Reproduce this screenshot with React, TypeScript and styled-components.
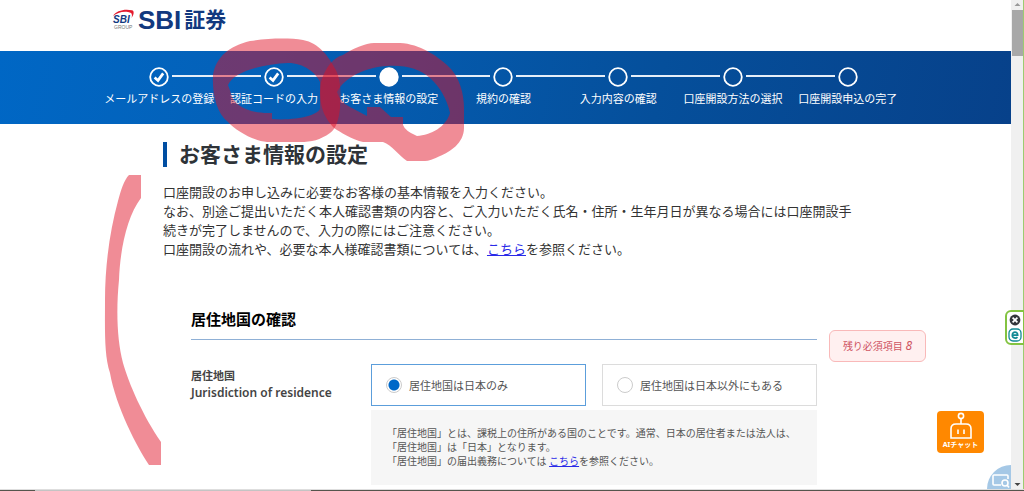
import React from "react";
import styled, { createGlobalStyle } from "styled-components";

const GlobalStyle = createGlobalStyle`
  * { box-sizing: border-box; }
  body {
    margin: 0;
    background: #fff;
    color: #333;
    font-family: "Noto Sans", "Noto Sans CJK JP", sans-serif;
    font-size: 13px;
    line-height: 19px;
  }
  a { color: #2a2ae8; }
`;

const Window = styled.div`
  position: relative;
  display: flex;
  flex-direction: column;
  height: 100vh;
  overflow: hidden;
`;

const Viewport = styled.div`
  display: flex;
  flex: 1;
  min-height: 0;
`;

const Page = styled.div`
  flex: 1;
  min-width: 0;
  overflow: hidden;
`;

const Header = styled.header`
  display: flex;
  align-items: center;
  height: 51px;
  padding: 0 112px 12px;
`;

const Logo = styled.a`
  display: flex;
  align-items: center;
  gap: 3px;
  color: #12397f;
  text-decoration: none;
`;

const GroupMark = styled.svg`
  width: 23px;
  height: 21px;
`;

const Brand = styled.span`
  display: flex;
  align-items: center;
  gap: 3px;
  font: 700 26px/30px "Liberation Sans", "Noto Sans CJK JP", sans-serif;
`;

const BrandKanji = styled.span`
  font-size: 21px;
  font-weight: 700;
`;

const StepBar = styled.nav`
  padding: 16px 106px 16px 102px;
  height: 73px;
  background: linear-gradient(100deg, #0067c5 0%, #0461b8 25%, #054f9b 65%, #07418a 100%);
`;

const StepList = styled.ol`
  display: grid;
  grid-template-columns: repeat(7, 1fr);
  margin: 0;
  padding: 0;
  list-style: none;
`;

const Step = styled.li`
  display: flex;
  flex-direction: column;
  gap: 4px;
  color: #fff;
  font-size: 11px;
  line-height: 16px;
  text-align: center;
  white-space: nowrap;
`;

const StepTrack = styled.span`
  display: grid;
  grid-template-columns: 1fr 20px 1fr;
  align-items: center;
  gap: 3px;
`;

const StepLine = styled.span<{ $shown: boolean }>`
  height: 2px;
  margin-bottom: 2px;
  background: ${(p) => (p.$shown ? "#e6eef8" : "transparent")};
`;

const StepLabel = styled.span`
  display: flex;
  justify-content: center;
`;

const Content = styled.main`
  max-width: 685px;
  margin: 0 auto;
  padding-top: 18px;
`;

const Title = styled.h1`
  margin: 0;
  padding-left: 12px;
  border-left: 4px solid #004ea2;
  color: #2e3338;
  font-size: 21px;
  line-height: 25px;
`;

const Lead = styled.p`
  margin: 16px 0 0;
  white-space: nowrap;
`;

const Section = styled.section`
  padding: 50px 31px 0 28px;
`;

const SectionTitle = styled.h2`
  margin: 0;
  padding-bottom: 10px;
  border-bottom: 1px solid #8fb0d6;
  color: #000;
  font-size: 15px;
  line-height: 20px;
`;

const Field = styled.fieldset`
  display: grid;
  grid-template-columns: 180px 1fr;
  margin: 0;
  padding: 24px 0 0;
  border: 0;
`;

const FieldLabel = styled.div`
  display: flex;
  flex-direction: column;
  padding-top: 3px;
  color: #444;
  font-size: 11px;
  font-weight: 600;
  line-height: 17px;
`;

const FieldLabelEnglish = styled.span`
  font-size: 12px;
`;

const FieldBody = styled.div`
  display: grid;
  gap: 4px;
`;

const Options = styled.div`
  display: grid;
  grid-template-columns: 1fr 1fr;
  gap: 16px;
`;

const Option = styled.label<{ $selected?: boolean }>`
  display: flex;
  align-items: center;
  gap: 7px;
  height: 42px;
  padding-left: 14px;
  border: 1px solid ${(p) => (p.$selected ? "#5c9edb" : "#dcdcdc")};
  color: #555;
  font-size: 11px;
`;

const Radio = styled.input`
  appearance: none;
  width: 16px;
  height: 16px;
  margin: 0;
  border: 1px solid #ccc;
  border-radius: 50%;
  background: #fff;
  &:checked {
    background: radial-gradient(circle, #0068c8 5px, #fff 6px);
  }
`;

const Note = styled.p`
  margin: 0;
  padding: 16px 16px 17px;
  background: #f6f6f6;
  color: #555;
  font-size: 10px;
  line-height: 14px;
  white-space: nowrap;
`;

const Remaining = styled.aside`
  position: absolute;
  top: 330px;
  right: 98px;
  width: 97px;
  padding: 6px 0;
  border: 1px solid #f9b9b9;
  border-radius: 6px;
  background: #fff0f0;
  color: #cf5563;
  font-size: 10px;
  line-height: 18px;
  text-align: center;
  em { font-size: 12px; }
`;

const ChatButton = styled.button`
  position: absolute;
  right: 40px;
  bottom: 38px;
  display: flex;
  flex-direction: column;
  align-items: center;
  width: 47px;
  height: 42px;
  padding: 1px 0 0;
  border: 0;
  border-radius: 4px;
  background: #ff8800;
  color: #fff;
  font: 700 7px/10px "Noto Sans", "Noto Sans CJK JP", sans-serif;
  white-space: nowrap;
`;

const CornerButton = styled.button`
  position: absolute;
  right: 13px;
  bottom: 2px;
  width: 24px;
  height: 24px;
  padding: 0;
  border: 0;
  border-radius: 24px 0 0 0;
  background: #a5c8e6;
`;

const SideTab = styled.div`
  position: absolute;
  top: 310px;
  right: 0;
  display: flex;
  flex-direction: column;
  align-items: center;
  gap: 2px;
  width: 19px;
  height: 35px;
  padding-top: 2px;
  border: 2px solid #83c341;
  border-right-width: 1px;
  border-radius: 6px 0 0 6px;
  background: #fff;
`;

const Plain = styled.button`
  display: flex;
  padding: 0;
  border: 0;
  background: none;
`;

const Scrollbar = styled.div`
  display: flex;
  flex-direction: column;
  align-items: center;
  width: 13px;
  border-right: 1px solid #9ccc70;
  background: #f0f0f0;
`;

const Thumb = styled.div`
  width: 11px;
  height: 46px;
  margin: 1px 0 auto;
  background: #a8a8a8;
`;

const Taskbar = styled.div`
  display: grid;
  grid-template-columns: 35px 276px 1fr;
  height: 2px;
  border-top: 1px solid #dedede;
  background: #55544c;
`;

const TaskbarItem = styled.span`
  grid-column: 2;
  background: #c4c4c4;
`;

const Marker = styled.svg`
  position: absolute;
  top: 0;
  left: 0;
  width: 1024px;
  height: 491px;
  pointer-events: none;
`;

type State = "done" | "current" | "todo";

const steps: { label: string; state: State }[] = [
  { label: "メールアドレスの登録", state: "done" },
  { label: "認証コードの入力", state: "done" },
  { label: "お客さま情報の設定", state: "current" },
  { label: "規約の確認", state: "todo" },
  { label: "入力内容の確認", state: "todo" },
  { label: "口座開設方法の選択", state: "todo" },
  { label: "口座開設申込の完了", state: "todo" },
];

function StepIcon({ state }: { state: State }) {
  return (
    <svg width="20" height="20" viewBox="0 0 20 20" fill="none">
      <circle cx="10" cy="10" r="8.8" stroke="#fff" strokeWidth="1.8" fill={state === "current" ? "#fff" : "none"} />
      {state === "done" && <path d="M5.6 10.4 9 13.4 14.2 6.4" stroke="#fff" strokeWidth="2.7" />}
    </svg>
  );
}

function Arrow({ up, color }: { up?: boolean; color: string }) {
  return (
    <svg width="9" height="9" viewBox="0 0 9 9">
      <path d={up ? "M1.5 6 4.5 3 7.5 6Z" : "M1.5 3 4.5 6 7.5 3Z"} fill={color} />
    </svg>
  );
}

export default function App() {
  return (
    <Window>
      <GlobalStyle />
      <Viewport>
        <Page>
          <Header>
            <Logo href="#">
              <GroupMark viewBox="0 0 23 21">
                <path d="M1 7C4 1.5 13 -.5 20 1.3 22.500 2 22 5.500 19.500 9 20.500 5.500 20 3.500 16 3 10 2.200 5 4 1 7Z" fill="#e31b2e" />
                <text x="1" y="14" fontFamily="Liberation Sans, sans-serif" fontSize="10" fontWeight="700" fontStyle="italic" fill="#12397f">SBI</text>
                <text x="2" y="20" fontFamily="Liberation Sans, sans-serif" fontSize="5" fill="#777">GROUP</text>
              </GroupMark>
              <Brand>
                SBI<BrandKanji>証券</BrandKanji>
              </Brand>
            </Logo>
          </Header>
          <StepBar>
            <StepList>
              {steps.map((step, i) => (
                <Step key={step.label}>
                  <StepTrack>
                    <StepLine $shown={i > 0} />
                    <StepIcon state={step.state} />
                    <StepLine $shown={i < steps.length - 1} />
                  </StepTrack>
                  <StepLabel>{step.label}</StepLabel>
                </Step>
              ))}
            </StepList>
          </StepBar>
          <Content>
            <Title>お客さま情報の設定</Title>
            <Lead>
              口座開設のお申し込みに必要なお客様の基本情報を入力ください。
              <br />
              なお、別途ご提出いただく本人確認書類の内容と、ご入力いただく氏名・住所・生年月日が異なる場合には口座開設手
              <br />
              続きが完了しませんので、入力の際にはご注意ください。
              <br />
              口座開設の流れや、必要な本人様確認書類については、<a href="#">こちら</a>を参照ください。
            </Lead>
            <Section>
              <SectionTitle>居住地国の確認</SectionTitle>
              <Field aria-labelledby="residence">
                <FieldLabel id="residence">
                  居住地国
                  <FieldLabelEnglish>Jurisdiction of residence</FieldLabelEnglish>
                </FieldLabel>
                <FieldBody>
                  <Options>
                    <Option $selected>
                      <Radio type="radio" name="residence" defaultChecked />
                      居住地国は日本のみ
                    </Option>
                    <Option>
                      <Radio type="radio" name="residence" />
                      居住地国は日本以外にもある
                    </Option>
                  </Options>
                  <Note>
                    「居住地国」とは、課税上の住所がある国のことです。通常、日本の居住者または法人は、
                    <br />
                    「居住地国」は「日本」となります。
                    <br />
                    「居住地国」の届出義務については <a href="#">こちら</a>を参照ください。
                  </Note>
                </FieldBody>
              </Field>
            </Section>
          </Content>
        </Page>
        <Scrollbar>
          <Arrow up color="#999" />
          <Thumb />
          <Arrow color="#444" />
        </Scrollbar>
      </Viewport>
      <Taskbar>
        <TaskbarItem />
      </Taskbar>

      <Remaining>
        残り必須項目 <em>8</em>
      </Remaining>
      <ChatButton type="button">
        <svg width="26" height="28" viewBox="0 0 26 28" fill="none" stroke="#fff" strokeWidth="1.6">
          <circle cx="13" cy="4" r="2.600" />
          <path d="M13 6.600V12M3 26V17C3 13.500 5 12 8 12H18C21 12 23 13.500 23 17V26Z" />
          <path d="M10 17.500V22M16 17.500V22" />
        </svg>
        AIチャット
      </ChatButton>
      <CornerButton type="button" aria-label="画面共有">
        <svg width="24" height="24" viewBox="0 0 24 24" fill="none" stroke="#fff" strokeWidth="1.600">
          <path d="M14 20H7Q6 20 6 19V11Q6 10 7 10H20Q21 10 21 11V14" />
          <circle cx="18" cy="18" r="3" />
          <path d="M20 20 22 22.500" />
        </svg>
      </CornerButton>
      <SideTab>
        <Plain type="button" aria-label="閉じる">
          <svg width="12" height="12" viewBox="0 0 12 12">
            <circle cx="6" cy="6" r="5.400" fill="#33363b" />
            <path d="M3.600 3.600 8.400 8.400M8.400 3.600 3.600 8.400" stroke="#fff" strokeWidth="1.700" />
          </svg>
        </Plain>
        <Plain type="button" aria-label="拡張機能">
          <svg width="14" height="14" viewBox="0 0 14 14" fill="none" stroke="#128a94">
            <rect x="1" y="1" width="12" height="12" rx="4" strokeWidth="1.300" />
            <path d="M4.300 7.200H9.700C9.700 3.200 4.300 3.200 4.300 7.200 4.300 10.400 8 10.600 9.500 9.200" strokeWidth="1.700" />
          </svg>
        </Plain>
      </SideTab>

      <Marker viewBox="0 0 1024 491" fill="#e00f24" fillOpacity="0.480" fillRule="evenodd">
        <path d="M213 75C216 57 229 46 250 41C270 38 290 38 303 40C319 43 329 57 334 67C341 77 341 92 340 108C339 119 336 129 330 133C320 140 312 142 300 142H267C254 141 236 131 228 122C216 113 212 92 213 75ZM228 85C234 71 264 64 288 63C304 63 316 73 320 82V108C320 115 295 121 272 119V113C250 114 236 106 232 97Q230 90 228 85Z" />
        <path d="M321 82C326 66 333 58 343 55C352 49 366 43 374 43H400C420 44 437 56 447 65C460 76 464 95 464 108V128C464 143 450 152 440 156Q430 161 425 161H407C399 156 392 145 383 142H363C353 140 340 132 334 128C324 117 318 105 321 82ZM337 92C345 77 366 67 387 66C407 65 419 69 430 78C440 87 447 99 450 113C446 127 431 135 417 136Q405 131 403 125V117H391L380 107H367V116L350 107Q340 102 337 92Z" />
        <path d="M129 175H141V198C127 216 120 250 119 280C116 310 117 340 123 363C129 384 143 416 161 442V465H149C137 447 116 407 110 373C104 355 105 330 105 300C105 265 110 230 118 201C121 190 124 180 129 175Z" />
      </Marker>
    </Window>
  );
}
